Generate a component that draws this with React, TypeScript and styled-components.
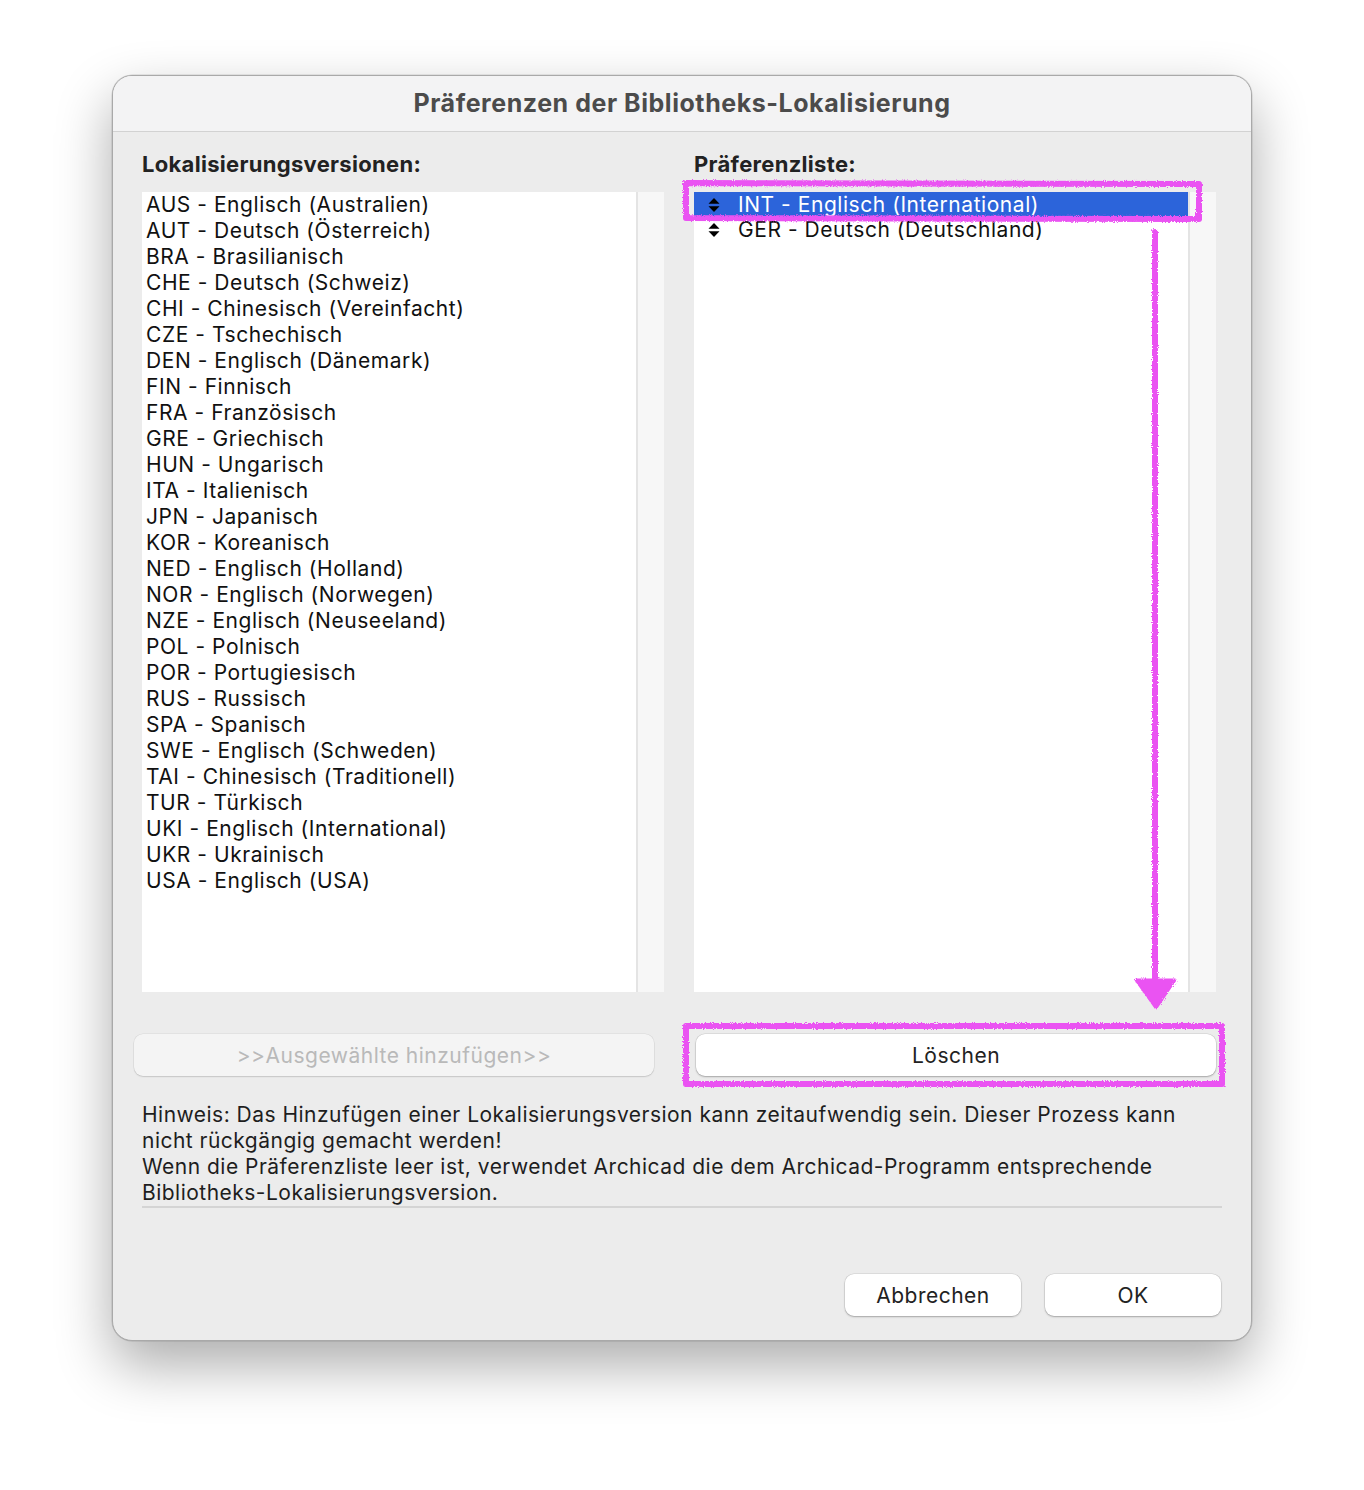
import styled, { createGlobalStyle } from "styled-components";

const GlobalStyle = createGlobalStyle`
  html, body {
    margin: 0;
    padding: 0;
    background: #ffffff;
  }
  body {
    font-family: Inter, "Noto Sans", "Liberation Sans", sans-serif;
    -webkit-font-smoothing: antialiased;
  }
`;

const Page = styled.div`
  position: relative;
  width: 1364px;
  height: 1490px;
  padding-top: 75px;
  box-sizing: border-box;
  display: flex;
  justify-content: center;
  align-items: flex-start;
`;

const Window = styled.div`
  width: 1140px;
  height: 1266px;
  box-sizing: border-box;
  border-radius: 20px;
  border: 1px solid #a9a9a9;
  background: #ececec;
  overflow: hidden;
  display: flex;
  flex-direction: column;
  box-shadow: 0 24px 56px rgba(0, 0, 0, 0.33), 0 0 0 0.5px rgba(0, 0, 0, 0.15);
`;

const TitleBar = styled.div`
  height: 56px;
  flex: none;
  background: #f3f3f4;
  border-bottom: 1px solid #d2d2d2;
  display: flex;
  align-items: center;
  justify-content: center;
  padding-bottom: 2px;
  box-sizing: border-box;
  font-size: 25px;
  font-weight: 700;
  color: #4b4b4b;
  letter-spacing: 0.55px;
`;

const Body = styled.div`
  flex: 1;
  display: flex;
  flex-direction: column;
  padding: 20px 29px 24px 29px;
`;

const Columns = styled.div`
  display: grid;
  grid-template-columns: 522px 522px;
  column-gap: 30px;
`;

const Column = styled.div`
  display: flex;
  flex-direction: column;
`;

const Label = styled.div`
  font-size: 22px;
  font-weight: 700;
  color: #222;
  height: 24px;
  line-height: 24px;
  letter-spacing: 0.3px;
  margin-bottom: 16px;
`;

const ListBox = styled.div`
  height: 800px;
  display: flex;
  background: #ffffff;
`;

const ListItems = styled.div`
  flex: 1;
  display: flex;
  flex-direction: column;
  border-right: 2px solid #e4e4e4;
`;

const ScrollTrack = styled.div`
  width: 26px;
  background: #f7f7f7;
`;

const Row = styled.div<{ $selected?: boolean }>`
  height: 26px;
  box-sizing: border-box;
  padding-bottom: 1px;
  display: flex;
  align-items: center;
  padding-left: 4px;
  font-size: 21px;
  letter-spacing: 0.55px;
  color: ${(p) => (p.$selected ? "#ffffff" : "#111")};
  background: ${(p) => (p.$selected ? "#2c64da" : "transparent")};
  white-space: nowrap;
`;

const PrefRow = styled(Row)`
  height: 25px;
  padding-bottom: 0;
  padding-left: 14px;
  gap: 18px;
`;

const SortGrip = styled.svg`
  width: 12px;
  height: 16px;
  flex: none;
`;

const ButtonRow = styled.div`
  display: grid;
  grid-template-columns: 522px 522px;
  column-gap: 30px;
  margin-top: 42px;
`;

const PushButton = styled.button<{ $disabled?: boolean }>`
  height: 42px;
  box-sizing: border-box;
  border: none;
  border-radius: 9px;
  font-family: inherit;
  font-size: 21px;
  letter-spacing: 0.5px;
  background: ${(p) => (p.$disabled ? "#f4f4f4" : "#ffffff")};
  color: ${(p) => (p.$disabled ? "#b9b9b9" : "#222")};
  box-shadow: ${(p) =>
    p.$disabled
      ? "0 0 0 0.5px rgba(0,0,0,0.08), 0 1px 1.5px rgba(0,0,0,0.12)"
      : "0 0 0 0.5px rgba(0,0,0,0.12), 0 1px 2px rgba(0,0,0,0.25)"};
`;

const AddButton = styled(PushButton)`
  width: 520px;
  margin-left: -8px;
`;

const DeleteButton = styled(PushButton)`
  width: 520px;
  margin-left: 2px;
`;

const Hint = styled.div`
  margin-top: 26px;
  font-size: 21px;
  letter-spacing: 0.48px;
  line-height: 26px;
  color: #1e1e1e;
  border-bottom: 2px solid #d4d4d4;
  width: 1080px;
  white-space: nowrap;
`;

const Footer = styled.div`
  margin-top: auto;
  display: flex;
  justify-content: flex-end;
  gap: 24px;
  padding-right: 1px;
`;

const DialogButton = styled(PushButton)`
  width: 176px;
`;

const Annotations = styled.svg`
  position: absolute;
  left: 0;
  top: 0;
  pointer-events: none;
`;

const versions = [
  "AUS - Englisch (Australien)",
  "AUT - Deutsch (Österreich)",
  "BRA - Brasilianisch",
  "CHE - Deutsch (Schweiz)",
  "CHI - Chinesisch (Vereinfacht)",
  "CZE - Tschechisch",
  "DEN - Englisch (Dänemark)",
  "FIN - Finnisch",
  "FRA - Französisch",
  "GRE - Griechisch",
  "HUN - Ungarisch",
  "ITA - Italienisch",
  "JPN - Japanisch",
  "KOR - Koreanisch",
  "NED - Englisch (Holland)",
  "NOR - Englisch (Norwegen)",
  "NZE - Englisch (Neuseeland)",
  "POL - Polnisch",
  "POR - Portugiesisch",
  "RUS - Russisch",
  "SPA - Spanisch",
  "SWE - Englisch (Schweden)",
  "TAI - Chinesisch (Traditionell)",
  "TUR - Türkisch",
  "UKI - Englisch (International)",
  "UKR - Ukrainisch",
  "USA - Englisch (USA)",
];

const preferred = ["INT - Englisch (International)", "GER - Deutsch (Deutschland)"];

const Grip = () => (
  <SortGrip viewBox="0 0 12 16">
    <path d="M6 1 L11.5 6.8 H0.5 Z" fill="#000" />
    <path d="M6 15 L11.5 9.2 H0.5 Z" fill="#000" />
  </SortGrip>
);

export default function App() {
  return (
    <Page>
      <GlobalStyle />
      <Window>
        <TitleBar>Präferenzen der Bibliotheks-Lokalisierung</TitleBar>
        <Body>
          <Columns>
            <Column>
              <Label>Lokalisierungsversionen:</Label>
              <ListBox>
                <ListItems>
                  {versions.map((v) => (
                    <Row key={v}>{v}</Row>
                  ))}
                </ListItems>
                <ScrollTrack />
              </ListBox>
            </Column>
            <Column>
              <Label>Präferenzliste:</Label>
              <ListBox>
                <ListItems>
                  {preferred.map((v, i) => (
                    <PrefRow key={v} $selected={i === 0}>
                      <Grip />
                      {v}
                    </PrefRow>
                  ))}
                </ListItems>
                <ScrollTrack />
              </ListBox>
            </Column>
          </Columns>

          <ButtonRow>
            <AddButton $disabled>&gt;&gt;Ausgewählte hinzufügen&gt;&gt;</AddButton>
            <DeleteButton>Löschen</DeleteButton>
          </ButtonRow>

          <Hint>
            Hinweis: Das Hinzufügen einer Lokalisierungsversion kann zeitaufwendig sein. Dieser Prozess kann
            <br />
            nicht rückgängig gemacht werden!
            <br />
            Wenn die Präferenzliste leer ist, verwendet Archicad die dem Archicad-Programm entsprechende
            <br />
            Bibliotheks-Lokalisierungsversion.
          </Hint>

          <Footer>
            <DialogButton>Abbrechen</DialogButton>
            <DialogButton>OK</DialogButton>
          </Footer>
        </Body>
      </Window>

      {/* hand-drawn marker strokes over the dialog */}
      <Annotations width={1364} height={1490} viewBox="0 0 1364 1490">
        <defs>
          <filter id="crayon" x="-5%" y="-5%" width="110%" height="110%">
            <feTurbulence type="fractalNoise" baseFrequency="0.9" numOctaves="2" seed="3" />
            <feDisplacementMap in="SourceGraphic" scale="3.5" />
          </filter>
        </defs>
        <g filter="url(#crayon)">
          <g fill="none" stroke="#ea52f2" strokeWidth={6} strokeLinejoin="round" strokeLinecap="round">
            <path d="M686 183 L1199 184 L1199 219 L686 218 Z" />
            <path d="M1155 232 L1155 982" />
            <path d="M686 1026 L1222 1026 L1222 1084 L686 1084 Z" />
          </g>
          <path
            d="M1136 980 L1175 980 L1156 1008 Z"
            fill="#ea52f2"
            stroke="#ea52f2"
            strokeWidth={3}
            strokeLinejoin="round"
          />
        </g>
      </Annotations>
    </Page>
  );
}
